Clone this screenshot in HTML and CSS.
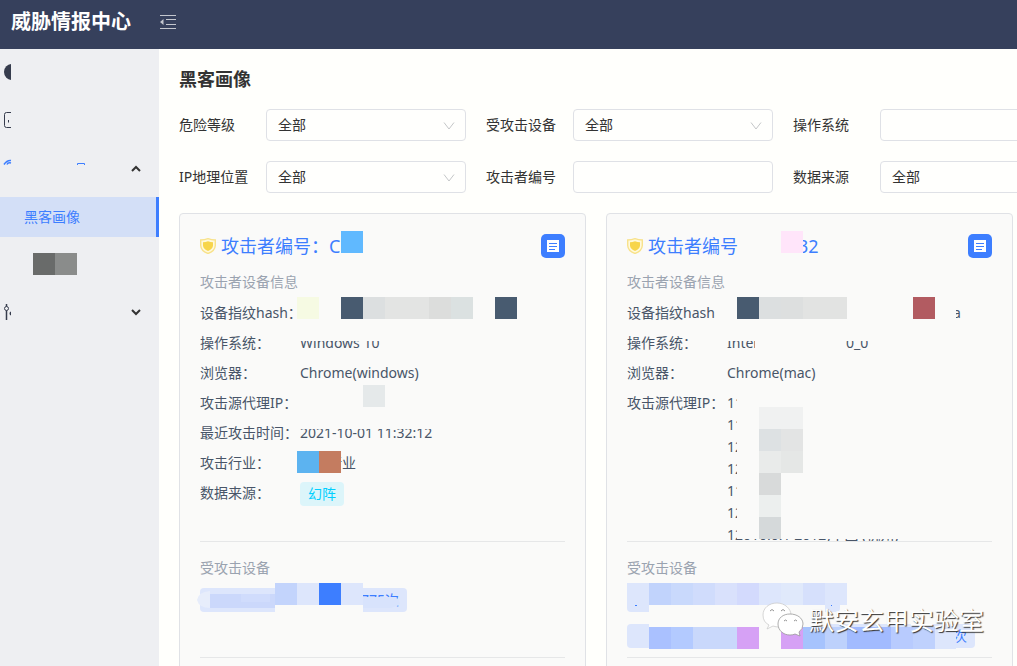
FILE: index.html
```
<!DOCTYPE html>
<html lang="zh-CN">
<head>
<meta charset="utf-8">
<meta name="viewport" content="width=device-width, initial-scale=1">
<title>威胁情报中心</title>
<link rel="stylesheet" href="styles.css">
</head>
<body>
<div class="app">
  <header class="topbar">
    <h1 class="brand">威胁情报中心</h1>
    <button class="fold" type="button" aria-label="收起菜单">
      <svg width="16" height="14" viewBox="0 0 16 14" fill="#c3c6ce"><path d="M0 0h16v1H0zM6 4h10v1H6zM6 9h10v1H6zM0 13h16v1H0zM0 7l3.500-3v6z"/></svg>
    </button>
  </header>
  <div class="body">
    <nav class="side">
      <a class="item" href="#" aria-label="概览"><svg width="7" height="16" viewBox="0 0 7 16"><circle cx="8" cy="8" r="8" fill="#363c4d"/></svg></a>
      <a class="item" href="#" aria-label="设备"><svg width="7" height="16" viewBox="0 0 7 16" fill="none" stroke="#363c4d"><path d="M7 .5H2.500Q.5.500.5 2.500v11q0 2 2 2H7"/><path d="M4.500 8v2.500"/></svg></a>
      <a class="item" href="#" aria-label="情报">
        <svg width="78" height="16" viewBox="0 0 78 16" overflow="visible" fill="none" stroke="#3d7eff"><path d="M0 4.500Q3 0 7 .5M3 4.500Q4 2 7 3" stroke-width="1.500"/><path d="M73.500 5V3.500h7V5"/></svg>
        <svg class="arrow" width="10" height="7" viewBox="0 0 10 7"><path d="M1 6l4-4 4 4"/></svg>
      </a>
      <a class="item sub active" href="#">黑客画像</a>
      <a class="item sub masked" href="#" aria-label="子菜单"><svg width="44" height="22"><path fill="#696b6a" d="M0 0h22v22H0z"/><path fill="#8a8c8b" d="M22 0h22v22H22z"/></svg></a>
      <a class="item" href="#" aria-label="设置">
        <svg width="7" height="16" viewBox="0 0 7 16" fill="none" stroke="#363c4d"><path d="M2.500 0v2.500M2.500 6.500V16" stroke-width="1.500"/><circle cx="2.500" cy="4.500" r="2"/><path d="M7 8Q5.500 9.500 7 11" stroke-width="1.500"/></svg>
        <svg class="arrow" width="10" height="7" viewBox="0 0 10 7"><path d="M1 1l4 4 4-4"/></svg>
      </a>
    </nav>
    <main class="main">
      <h2 class="heading">黑客画像</h2>
      <form class="filters">
        <label for="level">危险等级</label>
        <span class="pick"><select id="level"><option>全部</option></select><svg width="12" height="8" viewBox="0 0 12 8"><path d="M1 .5l5 6.500 5-6.500"/></svg></span>
        <label for="device">受攻击设备</label>
        <span class="pick"><select id="device"><option>全部</option></select><svg width="12" height="8" viewBox="0 0 12 8"><path d="M1 .5l5 6.500 5-6.500"/></svg></span>
        <label for="os">操作系统</label>
        <input id="os" type="text">
        <label for="geo">IP地理位置</label>
        <span class="pick"><select id="geo"><option>全部</option></select><svg width="12" height="8" viewBox="0 0 12 8"><path d="M1 .5l5 6.500 5-6.500"/></svg></span>
        <label for="number">攻击者编号</label>
        <input id="number" type="text">
        <label for="source">数据来源</label>
        <span class="pick"><select id="source"><option>全部</option></select><svg width="12" height="8" viewBox="0 0 12 8"><path d="M1 .5l5 6.500 5-6.500"/></svg></span>
      </form>
      <div class="cards">
        <article class="card">
          <div class="card-head">
            <svg class="shield" width="16" height="16" viewBox="0 0 16 16"><path d="M8 .7Q11.500 2 15.300 2V7.500Q15 13 8 15.500 1 13 .7 7.500V2Q4.500 2 8 .7z" fill="#fff9dc" stroke="#f8e28b" stroke-width="1.400"/><path d="M8 3.200q2.500 1 5 1v3.600q-.5 3.500-5 5.200-4.500-1.700-5-5.200V4.200q2.500 0 5-1z" fill="#f7d54b"/></svg>
            <h3>攻击者编号：C</h3>
            <button class="detail" type="button" aria-label="详情"><svg width="12" height="12"><path fill="#fff" d="M0 0h12v12H0z"/><path stroke="#3d7eff" d="M2 3.500h8M2 6.500h8M2 9.500h6"/></svg></button>
          </div>
          <section class="info">
            <h4>攻击者设备信息</h4>
            <dl>
              <dt>设备指纹hash：</dt><dd></dd>
              <dt>操作系统：</dt><dd>Windows 10</dd>
              <dt>浏览器：</dt><dd>Chrome(windows)</dd>
              <dt>攻击源代理IP：</dt><dd></dd>
              <dt>最近攻击时间：</dt><dd>2021-10-01 11:32:12</dd>
              <dt>攻击行业：</dt><dd class="industry">行业</dd>
              <dt>数据来源：</dt><dd><span class="tag cyan">幻阵</span></dd>
            </dl>
          </section>
          <section class="targets">
            <h4>受攻击设备</h4>
            <span class="tag first">775次</span>
          </section>
          <section class="more"></section>
          <svg class="mosaic" width="400" height="450" viewBox="180 214 400 450" shape-rendering="crispEdges">
            <g fill="#fafaf9"><path d="M298 330h90v11h-90zM298 420h140v9H298zM275 605h88v8h-88z"/></g>
            <path fill="#60b9ff" d="M341 231h22v22h-22z"/>
            <path fill="#f6fae3" d="M297 297h22v22h-22z"/>
            <path fill="#485b70" d="M341 297h22v22h-22zM495 297h22v22h-22z"/>
            <path fill="#dcdfe0" d="M363 297h22v22h-22z"/><path fill="#e3e4e3" d="M385 297h44v22h-44z"/><path fill="#dcdddc" d="M429 297h22v22h-22z"/><path fill="#dbe1e1" d="M451 297h22v22h-22z"/>
            <path fill="#e5e9ea" d="M363 385h22v22h-22z"/>
            <path fill="#5cb3f0" d="M297 451h22v22h-22z"/><path fill="#c47c60" d="M319 451h22v22h-22z"/>
            <path fill="#e7edfb" shape-rendering="auto" d="M210 591q-12 1-13 9 2 8 13 8z"/>
            <path fill="#cbd8fb" d="M210 594h65v14h-65z"/><path fill="#d0dcfc" d="M241 594h29v8h-29z"/>
            <path fill="#c3d4fc" d="M275 583h22v22h-22z"/><path fill="#dde6fc" d="M297 583h66v22h-66z"/><path fill="#3d7eff" d="M319 583h22v22h-22z"/>
            <path fill="#d8e3fc" shape-rendering="auto" d="M363 597h32l4 3 1 4-3 2-6 2h-28z"/>
          </svg>
        </article>
        <article class="card">
          <div class="card-head">
            <svg class="shield" width="16" height="16" viewBox="0 0 16 16"><path d="M8 .7Q11.500 2 15.300 2V7.500Q15 13 8 15.500 1 13 .7 7.500V2Q4.500 2 8 .7z" fill="#fff9dc" stroke="#f8e28b" stroke-width="1.400"/><path d="M8 3.200q2.500 1 5 1v3.600q-.5 3.500-5 5.200-4.500-1.700-5-5.200V4.200q2.500 0 5-1z" fill="#f7d54b"/></svg>
            <h3 class="split">攻击者编号<span>32</span></h3>
            <button class="detail" type="button" aria-label="详情"><svg width="12" height="12"><path fill="#fff" d="M0 0h12v12H0z"/><path stroke="#3d7eff" d="M2 3.500h8M2 6.500h8M2 9.500h6"/></svg></button>
          </div>
          <section class="info">
            <h4>攻击者设备信息</h4>
            <dl>
              <dt>设备指纹hash</dt><dd class="tail">a</dd>
              <dt>操作系统：</dt><dd class="system"><span>Intel</span><span>0_0</span></dd>
              <dt>浏览器：</dt><dd>Chrome(mac)</dd>
              <dt>攻击源代理IP：</dt><dd>11<br>11<br>12<br>12<br>11<br>12<br>12010.0.1 2012)中国 (杭州)</dd>
            </dl>
          </section>
          <section class="targets">
            <h4>受攻击设备</h4>
            <span class="tag second"></span>
            <span class="tag third">次</span>
          </section>
          <section class="more"></section>
          <svg class="mosaic" width="400" height="450" viewBox="607 214 400 450" shape-rendering="crispEdges">
            <g fill="#fafaf9"><path d="M725 330h150v11H725zM737 392h255v147H737zM755 335h4v18h-4zM950 304h6v18h-6zM649 605h176v8H649zM649 622h176v5H649z"/></g>
            <path fill="#ffe5fa" d="M781 231h22v22h-22z"/>
            <path fill="#485b70" d="M737 297h22v22h-22z"/><path fill="#dcdfe0" d="M759 297h22v22h-22z"/><path fill="#dddfdf" d="M781 297h22v22h-22z"/><path fill="#e2e3e2" d="M803 297h44v22h-44z"/>
            <path fill="#b25b61" d="M913 297h22v22h-22z"/>
            <path fill="#f0f1f1" d="M759 407h44v22h-44z"/><path fill="#dde1e3" d="M759 429h22v22h-22z"/><path fill="#e3e4e4" d="M781 429h22v22h-22z"/>
            <path fill="#e9ebea" d="M759 451h22v22h-22z"/><path fill="#e5e7e6" d="M781 451h22v22h-22z"/>
            <path fill="#d8dada" d="M759 473h22v22h-22z"/><path fill="#ecefee" d="M759 495h22v22h-22z"/><path fill="#d5d9da" d="M759 517h22v22h-22z"/>
            <path fill="#dde6fc" d="M627 583h22v22h-22z"/><path fill="#c1d3fc" d="M649 583h22v22h-22z"/><path fill="#c9d9fc" d="M671 583h22v22h-22z"/><path fill="#d0dcfc" d="M693 583h22v22h-22z"/><path fill="#d9e1fc" d="M715 583h22v22h-22z"/><path fill="#d3dafd" d="M737 583h22v22h-22z"/><path fill="#dde6fc" d="M759 583h22v22h-22zM825 583h22v22h-22z"/><path fill="#e0e9fb" d="M781 583h22v22h-22z"/><path fill="#d6e0fc" d="M803 583h22v22h-22z"/>
            <path fill="#3d7eff" d="M635 605h2v1h-2zM831 605h1v1h-1z"/>
            <path fill="#aac1ff" d="M649 627h22v22h-22z"/><path fill="#b3caff" d="M671 627h22v22h-22z"/><path fill="#c9d8fb" d="M693 627h44v22h-44z"/>
            <path fill="#d6a1f5" d="M737 627h22v22h-22zM781 627h22v22h-22z"/><path fill="#fafaf9" d="M759 624h22v25h-22z"/>
            <path fill="#a6c3fd" d="M803 627h22v22h-22z"/><path fill="#bdd1fc" d="M825 627h22v22h-22z"/><path fill="#a2bbff" d="M847 627h44v22h-44z"/><path fill="#b8cbfe" d="M891 627h22v22h-22z"/><path fill="#bfd1fd" d="M913 627h22v22h-22z"/><path fill="#dde6fc" d="M935 627h21v22h-21z"/>
          </svg>
        </article>
      </div>
    </main>
  </div>
  <div class="watermark">
    <svg width="42" height="36" viewBox="0 0 42 36"><g fill="#fff" stroke="#999" stroke-width=".8"><path d="M15 1C7 1 1 6 1 13q0 7 6 10l-2 4 6-3q3 1 6 1c8 0 12-6 12-12S23 1 15 1z" stroke="#ccc"/><path d="M28 12c-7 0-12 4-12 10s5 11 12 11q3 0 5-1l5 2-1-4q4-3 4-8c0-6-6-10-13-10z"/><path fill="none" stroke="#777" d="M8 9q2-3 4 0M19 9q2-3 4 0M22 19q1.500-2 3 0M32 19q1.500-2 3 0"/></g></svg>
    <span>默安玄甲实验室</span>
  </div>
</div>
</body>
</html>
```
FILE: styles.css
```
* { box-sizing: border-box; }

body {
  margin: 0;
  background: #fffffc;
  color: #333;
  font: 14px/22px "Noto Sans", "Noto Sans CJK SC", sans-serif;
}

h1, h2, h3, h4, dl, dd { margin: 0; font-weight: 400; }
button, input, select { font: inherit; color: inherit; }
svg { display: block; flex: none; }
a { color: inherit; text-decoration: none; }

.app {
  position: relative;
  display: flex;
  flex-direction: column;
  height: 100vh;
  overflow: hidden;
}

.topbar {
  display: flex;
  align-items: center;
  flex: none;
  gap: 29px;
  padding: 0 11px 6px;
  height: 49px;
  background: #36405c;
}
.brand { color: #fff; font-size: 20px; font-weight: 700; line-height: 28px; }
.fold { padding: 0; border: 0; background: none; }

.body { display: flex; flex: 1; min-height: 0; }

.side {
  display: flex;
  flex-direction: column;
  flex: none;
  gap: 8px;
  width: 159px;
  padding-top: 4px;
  background: #eeeff2;
}
.item {
  display: flex;
  align-items: center;
  justify-content: space-between;
  flex: none;
  height: 40px;
  padding: 0 18px 2px 4px;
}
.arrow { fill: none; stroke: #333; stroke-width: 2; }
.sub { padding: 0 24px; }
.masked { padding: 0 33px 2px; }
.active { background: #d3dff7; border-right: 3px solid #3d7eff; color: #3d7eff; }

.main { flex: 1; min-width: 0; overflow: hidden; padding: 17px 4px 0 20px; }
.heading { font-size: 18px; font-weight: 700; line-height: 26px; margin-bottom: 17px; }

.filters {
  display: grid;
  grid-template-columns: repeat(3, 67px 200px);
  align-items: center;
  gap: 20px;
  width: max-content;
}
.filters label { white-space: nowrap; }
.filters input, .filters select {
  display: block;
  width: 100%;
  height: 32px;
  padding: 0 11px;
  border: 1px solid #dfe1e6;
  border-radius: 4px;
  background: #fffffd;
  appearance: none;
}
.pick { position: relative; }
.pick svg {
  position: absolute;
  top: 13px;
  right: 11px;
  fill: none;
  stroke: #c4c6c8;
  pointer-events: none;
}

.cards {
  display: grid;
  grid-template-columns: repeat(2, minmax(0, 1fr));
  gap: 20px;
  margin-top: 20px;
}
.card {
  position: relative;
  padding: 20px;
  border: 1px solid #e0e2e6;
  border-radius: 4px;
  background: #fafaf9;
  color: #485568;
}
.card-head { display: flex; align-items: center; gap: 5px; height: 24px; }
.card-head h3 { flex: 1; color: #3d7eff; font-size: 18px; line-height: 24px; }
.card-head .split { display: flex; gap: 60px; }
.detail {
  display: grid;
  place-items: center;
  width: 24px;
  height: 24px;
  padding: 0;
  border: 0;
  border-radius: 5px;
  background: #3d7eff;
}
.card h4 { color: #9aa3b0; font-size: 14px; line-height: 22px; }

.info {
  height: 284px;
  padding-top: 13px;
  border-bottom: 1px solid #e6e7e8;
  overflow: hidden;
}
.info dl {
  display: grid;
  grid-template-columns: 100px minmax(0, 1fr);
  gap: 8px 0;
  padding-top: 9px;
}
.info dt, .info dd { min-height: 22px; white-space: nowrap; }
.industry { padding-left: 28px; }
.tail { padding-left: 226px; }
.system { display: flex; gap: 89px; }

.tag {
  display: block;
  width: max-content;
  height: 24px;
  padding: 0 8px;
  border-radius: 4px;
  background: #dde6fc;
  color: #3d7eff;
  line-height: 24px;
  text-align: right;
}
.cyan { background: #dcf5fa; color: #00cfff; }

.targets {
  display: grid;
  align-content: start;
  gap: 12px;
  height: 116px;
  padding-top: 15px;
  border-bottom: 1px solid #e6e7e8;
}
.targets h4 { margin-bottom: -3px; }
.first { width: 207px; }
.second { width: 213px; }
.third { width: 348px; }
.more { height: 120px; }

.mosaic { position: absolute; top: 0; left: 0; pointer-events: none; }

.watermark {
  position: absolute;
  right: 33px;
  bottom: 28px;
  display: flex;
  align-items: center;
  gap: 5px;
  color: #fff;
  font-size: 25px;
  line-height: 36px;
  text-shadow: 1px 1px 1px #333;
}
```
